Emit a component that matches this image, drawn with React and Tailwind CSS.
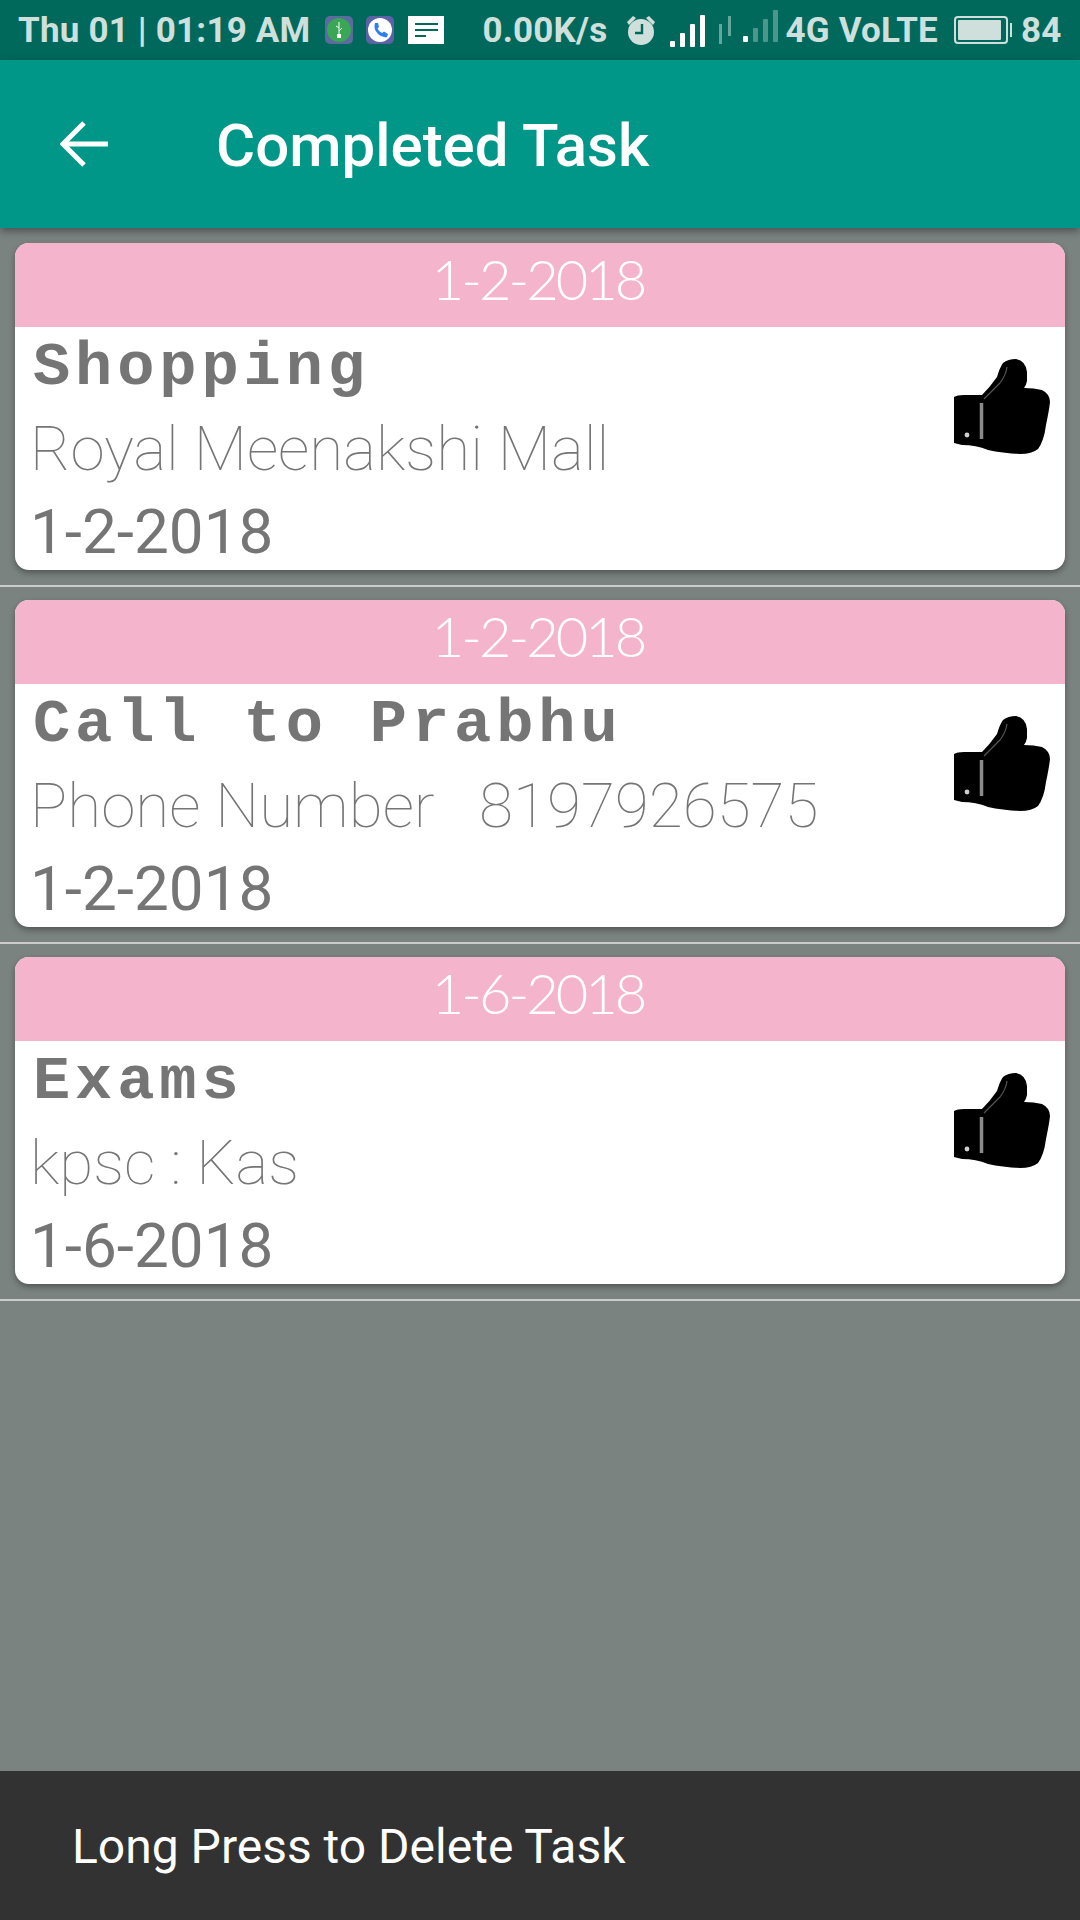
const tasks = [
  { head: '1-2-2018', title: 'Shopping', desc: 'Royal Meenakshi Mall', date: '1-2-2018' },
  { head: '1-2-2018', title: 'Call to Prabhu', desc: 'Phone Number   8197926575', date: '1-2-2018' },
  { head: '1-6-2018', title: 'Exams', desc: 'kpsc : Kas', date: '1-6-2018' },
];

function Thumb() {
  return (
    <svg width="96" height="96" viewBox="0 0 96 96" className="shrink-0 blur-[0.6px]">
      <path fill="#000" d="M0 38 Q3 36 10 36 L28 36 Q36 28 43 18 Q46 8 49 4 Q54 0 62 0 Q72 2 73 13 L73 22 Q72 27 70 29 Q80 29 88 31 Q96 35 96 43 Q95 52 92 66 Q90 82 84 90 Q78 95 66 95 Q48 94 34 91 Q22 86 8 86 L0 84 Z" />
      <path fill="none" stroke="#8a8a8a" strokeWidth="3.5" d="M27.5 44 L27.5 80" />
      <circle cx="13" cy="76" r="2.4" fill="#cfcfcf" />
      <path fill="none" stroke="#555" strokeWidth="1.2" d="M53 8 Q52 16 46 24 L30 40" />
    </svg>
  );
}

function Card({ t }) {
  return (
    <div className="h-[357px] flex flex-col">
      <div className="shrink-0 mx-[15px] mt-[15px] h-[327px] rounded-[14px] overflow-hidden bg-white shadow-[0_3px_6px_rgba(0,0,0,0.35)] flex flex-col">
        <div className="h-[84px] bg-[#f4b4cb] flex items-center justify-center text-white text-[56px] font-light tracking-[-3px] font-['Lato','Roboto',sans-serif] pb-[12px] pr-[4px]">
          {t.head}
        </div>
        <div className="flex-1 flex pl-[15px] pr-[15px]">
          <div className="flex-1 flex flex-col min-w-0 text-[#757575]">
            <div className="h-[83px] flex items-center text-[62px] leading-none font-bold font-['Liberation_Mono',monospace] tracking-[4.9px] whitespace-pre pb-[2px] pl-[3px]">
              {t.title}
            </div>
            <div className="h-[83px] flex items-center text-[62px] leading-none font-thin font-['Roboto',sans-serif] whitespace-pre pb-[6px]">
              {t.desc}
            </div>
            <div className="h-[77px] flex items-center text-[62px] leading-none font-['Roboto',sans-serif]">
              {t.date}
            </div>
          </div>
          <div className="pt-[32px]"><Thumb /></div>
        </div>
      </div>
      <div className="shrink-0 mt-[15px] h-[2px] bg-[#c9ccca]" />
    </div>
  );
}

function Bars({ dim, heights }) {
  return (
    <div className="flex items-end gap-[5px]">
      {heights.map((h, i) => (
        <div key={i} className="w-[5px] rounded-[1px]" style={{ height: h, backgroundColor: i >= dim ? 'rgba(255,255,255,0.3)' : '#fff' }} />
      ))}
    </div>
  );
}

function StatusBar() {
  return (
    <div className="h-[60px] bg-[#00695c] relative flex items-center pl-[18px] text-[#cfe0dc] text-[35px] font-bold tracking-[0.2px] font-['Roboto',sans-serif] whitespace-pre">
      <span className="mt-[2px]">Thu 01 | 01:19 AM</span>
      <svg width="28" height="28" viewBox="0 0 28 28" className="ml-[15px]">
        <rect width="28" height="28" rx="5" fill="#5b6b9e" />
        <circle cx="14" cy="14" r="12" fill="#3aa757" />
        <path d="M14 6 V20 M14 12 L11 10 M14 15 L17 12" stroke="#fff" strokeWidth="1" fill="none" />
        <rect x="12" y="18" width="4" height="4" fill="#fff" />
      </svg>
      <svg width="28" height="28" viewBox="0 0 28 28" className="ml-[13px]">
        <rect width="28" height="28" rx="5" fill="#5b62a6" />
        <circle cx="14" cy="14" r="12" fill="#fff" />
        <path d="M9 7 L12 7 L13 11 L11.5 12.5 Q13 16 16 17 L18 15.5 L22 18 L21 21 Q16 22 12 18 Q7 13 9 7Z" fill="#2f80ed" />
      </svg>
      <div className="ml-[14px] w-[36px] h-[28px] bg-white flex flex-col gap-[4px] pl-[7px] pt-[7px]">
        <div className="w-[23px] h-[2px] bg-[#00695c]" />
        <div className="w-[23px] h-[2px] bg-[#00695c]" />
        <div className="w-[11px] h-[2px] bg-[#00695c]" />
      </div>
      <span className="ml-[38px] mt-[2px]">0.00K/s</span>
      <svg width="32" height="32" viewBox="0 0 32 32" className="ml-[18px]">
        <circle cx="16" cy="18" r="13" fill="#cfe0dc" />
        <path d="M2 8 L8 2 L11 4 L4 11Z M30 8 L24 2 L21 4 L28 11Z" fill="#cfe0dc" />
        <path d="M17 10 V19 H10" stroke="#00695c" strokeWidth="2.4" fill="none" />
      </svg>
      <div className="ml-[13px] mt-[2px]"><Bars dim={9} heights={[6, 14, 23, 32]} /></div>
      <div className="ml-[14px] flex items-end gap-[6px]">
        <div className="w-[3px] h-[20px] bg-white/40" />
        <div className="w-[3px] h-[20px] bg-white/40 mb-[8px]" />
      </div>
      <div className="ml-[12px] mb-[8px]"><Bars dim={1} heights={[6, 14, 23, 32]} /></div>
      <span className="ml-[7px] mt-[2px]">4G VoLTE</span>
      <div className="ml-[16px] w-[54px] h-[28px] border-2 border-[#cfe0dc] rounded-[4px] p-[2px]">
        <div className="w-[43px] h-full bg-[#cfe0dc] rounded-[1px]" />
      </div>
      <div className="ml-[2px] w-[2px] h-[14px] bg-[#cfe0dc]" />
      <span className="ml-[9px] mt-[2px]">84</span>
    </div>
  );
}

export default function App() {
  return (
    <div className="w-[1080px] h-[1920px] flex flex-col bg-[#7b8381] overflow-hidden font-['Roboto',sans-serif]">
      <StatusBar />
      <div className="relative z-10 h-[168px] bg-[#009688] shadow-[0_3px_8px_rgba(0,0,0,0.4)] flex items-center">
        <svg width="48" height="48" viewBox="0 0 48 48" className="ml-[60px]" fill="none" stroke="#fff" strokeWidth="5">
          <path d="M48 24 H4 M24 3 L3 24 L24 45" />
        </svg>
        <span className="ml-[108px] mt-[4px] text-[60px] font-medium text-white">Completed Task</span>
      </div>
      <div className="flex-1">
        {tasks.map((t, i) => <Card key={i} t={t} />)}
      </div>
      <div className="h-[149px] bg-[#323232] flex items-center pl-[72px] pt-[3px] text-white text-[48px]">
        Long Press to Delete Task
      </div>
    </div>
  );
}
